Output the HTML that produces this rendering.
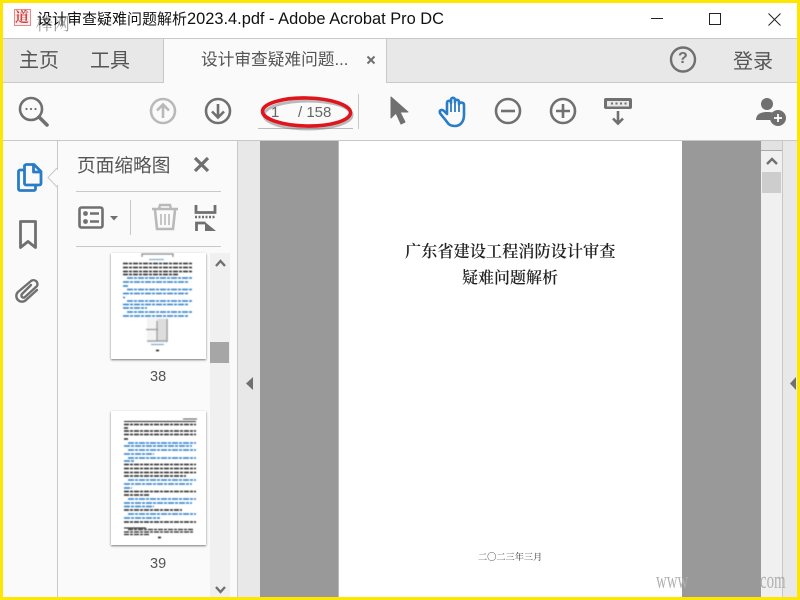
<!DOCTYPE html>
<html lang="zh"><head><meta charset="utf-8"><title>Adobe Acrobat</title>
<style>
html,body{margin:0;padding:0}
body{width:800px;height:600px;overflow:hidden;position:relative;background:#fafafa;font-family:"Liberation Sans","Noto Sans CJK SC",sans-serif}
.a{position:absolute}
.t{position:absolute;white-space:nowrap;line-height:1}
svg{position:absolute;overflow:visible}
.thumb{filter:blur(.45px)}
</style></head><body>
<div class="a" style="left:3px;top:3px;width:794px;height:35px;background:#fff"></div>
<div class="a" style="left:3px;top:38px;width:794px;height:1px;background:#c8c8c8"></div>
<div class="a" style="left:3px;top:39px;width:794px;height:43px;background:#e8e8e8"></div>
<div class="a" style="left:163px;top:39px;width:224px;height:44px;background:#fafafa;border-left:1px solid #c8c8c8;border-right:1px solid #c8c8c8;box-sizing:border-box"></div>
<div class="a" style="left:3px;top:82px;width:160px;height:1px;background:#c8c8c8"></div>
<div class="a" style="left:387px;top:82px;width:410px;height:1px;background:#c8c8c8"></div>
<div class="a" style="left:3px;top:140px;width:794px;height:1px;background:#c8c8c8"></div>
<div class="a" style="left:57px;top:141px;width:1px;height:456px;background:#c8c8c8"></div>
<div class="a" style="left:210px;top:253px;width:20px;height:344px;background:#f0f0f0"></div>
<div class="a" style="left:210px;top:342px;width:19px;height:21px;background:#a6a6a6"></div>
<div class="a" style="left:237px;top:141px;width:1px;height:456px;background:#c8c8c8"></div>
<div class="a" style="left:238px;top:141px;width:22px;height:456px;background:#e8e8e8"></div>
<div class="a" style="left:260px;top:141px;width:78px;height:456px;background:#999"></div>
<div class="a" style="left:338px;top:141px;width:344px;height:456px;background:#fff;border-left:1px solid #bbb;box-sizing:border-box"></div>
<div class="a" style="left:682px;top:141px;width:79px;height:456px;background:#999"></div>
<div class="a" style="left:761px;top:141px;width:21px;height:456px;background:#f0f0f0"></div>
<div class="a" style="left:761px;top:141px;width:21px;height:10px;background:#e2e2e2;border-bottom:1px solid #aaa;box-sizing:border-box"></div>
<div class="a" style="left:762px;top:172px;width:19px;height:21px;background:#cdcdcd"></div>
<div class="a" style="left:782px;top:141px;width:1px;height:456px;background:#c8c8c8"></div>
<div class="a" style="left:783px;top:141px;width:14px;height:456px;background:#e8e8e8"></div>

<!-- title bar -->
<div class="a" style="left:14px;top:9px;width:15px;height:15px;border:1px solid #e88;background:#fdeeee"></div>
<div class="t" style="left:15px;top:10px;font-size:14px;font-weight:bold;color:#c44;font-family:'Noto Serif CJK SC',serif">道</div>
<div class="t" style="left:36px;top:14px;font-size:17px;color:#999;font-family:'Noto Serif CJK SC',serif">棒网</div>
<div class="t" style="left:37px;top:11px;font-size:15px;color:#111">设计审查疑难问题解析<span style="font-size:16.4px">2023.4.pdf - Adobe Acrobat Pro DC</span></div>
<svg style="left:0;top:0" width="800" height="40" fill="none" stroke="#222" stroke-width="1">
<path d="M651 18.500h12"/><rect x="709.500" y="13.500" width="11" height="11"/><path d="M768.500 13.500l12 12M780.500 13.500l-12 12"/></svg>

<!-- tabs -->
<div class="t" style="left:19px;top:51px;font-size:20px;color:#555">主页</div>
<div class="t" style="left:90px;top:51px;font-size:20px;color:#555">工具</div>
<div class="t" style="left:201px;top:52px;font-size:16.700px;color:#555">设计审查疑难问题...</div>
<svg style="left:0;top:0" width="800" height="140" fill="none" stroke="#707070">
<path d="M367.500 56.500l7 7M374.500 56.500l-7 7" stroke-width="2"/>
<circle cx="683" cy="59.500" r="12" stroke-width="2.400"/>
</svg>
<div class="t" style="left:678px;top:51px;font-size:16px;font-weight:bold;color:#707070">?</div>
<div class="t" style="left:733px;top:52px;font-size:20px;color:#555">登录</div>

<!-- toolbar icons -->
<svg style="left:0;top:0" width="800" height="140" fill="none" stroke="#707070" stroke-width="2.600">
<circle cx="31" cy="109" r="11"/><path d="M39 117l8 8" stroke-width="3.600" stroke-linecap="round"/>
<circle cx="26.500" cy="109" r="1.100" fill="#707070" stroke="none"/><circle cx="31" cy="109" r="1.100" fill="#707070" stroke="none"/><circle cx="35.500" cy="109" r="1.100" fill="#707070" stroke="none"/>
<g stroke="#b9b9b9"><circle cx="163" cy="111" r="12"/><path d="M163 118v-13M157 110.500l6-6 6 6"/></g>
<circle cx="218" cy="111" r="12"/><path d="M218 104v13M212 111.500l6 6 6-6"/>
<circle cx="508" cy="111" r="12"/><path d="M501 111h14"/>
<circle cx="563" cy="111" r="12"/><path d="M556 111h14M563 104v14"/>
<path d="M618 111v12M613 118.500l5 5 5-5"/>
<path d="M391 97v21l5-5 5 11 4-2-5-10h8z" fill="#707070" stroke="#707070" stroke-width="1" stroke-linejoin="round"/>
<path d="M447 122c-2-3-6-7-7-9-1-3 2-4 4-2l3 3v-11c0-3 4-3 4 0v-3c0-3 4-3 4 0v2c0-3 4-3 4 0v2c1-2 5-2 5 1v10c0 7-4 11-9 11-4 0-6-1-8-4z" stroke="#2a7cc7" stroke-linejoin="round"/>
<path d="M451 103v9M455 100v12M459 102v10" stroke="#2a7cc7" stroke-width="1.800"/>
</svg>
<svg style="left:0;top:0" width="800" height="140">
<rect x="604" y="98" width="28" height="11" rx="2" fill="#707070"/>
<rect x="607" y="101" width="22" height="5.500" fill="#e8e8e8"/>
<path d="M611 102.500h2v2h-2zM615.500 102.500h2v2h-2zM620 102.500h2v2h-2zM624.500 102.500h2v2h-2z" fill="#707070"/>
</svg>
<div class="a" style="left:358px;top:94px;width:1px;height:35px;background:#c8c8c8"></div>
<div class="a" style="left:258px;top:128px;width:95px;height:1px;background:#bbb"></div>
<div class="t" style="left:271px;top:105px;font-size:15px;color:#666">1</div>
<div class="t" style="left:298px;top:105px;font-size:15px;color:#666">/ 158</div>
<svg style="left:0;top:0" width="800" height="140" fill="none">
<ellipse cx="308" cy="115" rx="44" ry="14" stroke="#777" stroke-width="3" opacity=".5"/>
<ellipse cx="306.500" cy="112" rx="44" ry="14" stroke="#e0141c" stroke-width="3.600" transform="rotate(1 306.500 112)"/>
<circle cx="767" cy="104" r="6" fill="#707070"/>
<path d="M756 120c0-6 5-8 11-8s9 1 10 3l-6 5z" fill="#707070"/>
<circle cx="778" cy="118" r="8" fill="#707070"/>
<path d="M774 118h8M778 114v8" stroke="#fff" stroke-width="1.800"/>
</svg>

<!-- left rail -->
<svg style="left:0;top:0" width="60" height="320" fill="none" stroke="#707070" stroke-width="2.400">
<g stroke="#2a7cc7" stroke-linejoin="round" stroke-width="2.800"><path d="M25 170h-5a1.500 1.500 0 0 0-1.500 1.500V189a1.500 1.500 0 0 0 1.500 1.500h14a1.500 1.500 0 0 0 1.500-1.500v-3"/>
<path d="M26 164.500h8l7 7v12a1.500 1.500 0 0 1-1.500 1.500H26a1.500 1.500 0 0 1-1.500-1.500v-18z" fill="#fafafa"/><path d="M33.500 164.500v7.500h7.500"/></g>
<path d="M20.500 247.500v-26h15v26l-7.500-6z" stroke-width="2.800" stroke-linejoin="round"/>
<path d="M37 290L26 300a5.500 5.500 0 0 1-8-8L31 281a4 4 0 0 1 6 5L25 297a2 2 0 0 1-3-3L31 285" stroke-width="2.400" stroke-linecap="round"/>
</svg>
<svg style="left:47px;top:168px" width="12" height="20"><path d="M10 0L1 9.500 10 19" fill="#fafafa" stroke="#c8c8c8"/></svg>
<div class="a" style="left:57px;top:170px;width:2px;height:15px;background:#fafafa"></div>

<!-- panel -->
<div class="t" style="left:77px;top:157px;font-size:18.700px;color:#555">页面缩略图</div>
<svg style="left:0;top:140px" width="240" height="120" fill="none" stroke="#707070" stroke-width="2.600">
<path d="M195 18l13 13M208 18l-13 13" stroke-width="3.200"/>
<rect x="79.500" y="67.500" width="23" height="20" rx="2"/>
<circle cx="85.500" cy="73.500" r="2.400" fill="#707070" stroke="none"/><circle cx="85.500" cy="81.500" r="2.400" fill="#707070" stroke="none"/>
<path d="M90 73.500h9M90 81.500h9" stroke-width="2.400"/>
<path d="M110 76h8l-4 4.500z" fill="#707070" stroke="none"/>
<g stroke="#b9b9b9"><path d="M152 69h26M159 69l1-4h10l1 4" stroke-width="2.400"/><path d="M155 70l2 19h16l2-19" stroke-width="2.600"/><path d="M161 74v11M165 74v11M169 74v11" stroke-width="1.600"/></g>
<path d="M196 65v7.500h19v-7.500" stroke-width="2.800"/>
<path d="M195 77h21" stroke-width="2.400" stroke-dasharray="2 1.500"/>
<path d="M196.500 91v-8h9" stroke-width="2.800"/>
<path d="M205 82l11 9h-11z" fill="#707070" stroke="none"/>
</svg>
<div class="a" style="left:76px;top:191px;width:145px;height:1px;background:#c8c8c8"></div>
<div class="a" style="left:76px;top:246px;width:145px;height:1px;background:#c8c8c8"></div>
<div class="a" style="left:130px;top:200px;width:1px;height:35px;background:#c8c8c8"></div>

<!-- thumbs -->
<div class="a" style="left:111px;top:253px;width:95px;height:106px;background:#fff;box-shadow:0 1px 2px #777"></div>
<svg class="thumb" style="left:111px;top:253px" width="95" height="106" fill="none" stroke-width="1.500">
<path d="M31 4V1h31v3" stroke="#888" stroke-width="1.200"/>
<path d="M38 6.500h15" stroke="#6a9bd0" stroke-width="1"/>
<g stroke="#222" stroke-dasharray="5 1 3 1"><path d="M12 10.500h70M12 14.500h70M12 18.500h70M12 21.500h56"/></g>
<g stroke="#2a7cc7" stroke-dasharray="6 1 3 1"><path d="M16 25h66M12 29h66M12 33h5M16 36.500h66M12 40.500h66M12 44.500h2M16 48h66M12 51.500h66M12 55h24M16 59h66M12 63h66"/></g>
<rect x="36" y="65" width="21" height="25" fill="#f3f3f3" stroke="none"/>
<rect x="46" y="66" width="11" height="22" fill="#ddd" stroke="none"/>
<path d="M35 76.500h12M46 68v20M36 88h20M56 66v23" stroke="#999" stroke-width="1.200"/>
<path d="M40 91.500h13" stroke="#6a9bd0" stroke-width="1"/>
<path d="M45 97.500h3" stroke="#111" stroke-width="1.500"/>
</svg>
<div class="t" style="left:150px;top:370px;font-size:14.500px;color:#555">38</div>

<div class="a" style="left:111px;top:411px;width:95px;height:134px;background:#fff;box-shadow:0 1px 2px #777"></div>
<svg class="thumb" style="left:111px;top:411px" width="95" height="134" fill="none" stroke-width="1.500">
<path d="M72 8h14" stroke="#555" stroke-width="1"/>
<path d="M13 10.500h72" stroke="#222" stroke-width="1"/>
<g stroke="#222" stroke-dasharray="5 1 3 1"><path d="M13 13.500h72M13 17h4M13 20h72M13 23.500h72M13 28h4"/></g>
<g stroke="#2a7cc7" stroke-dasharray="6 1 3 1"><path d="M17 32h68M13 35h68M17 39h68M13 43h30M17 47h68M13 50h10"/></g>
<g stroke="#222" stroke-dasharray="5 1 3 1"><path d="M13 53.500h72M13 57.500h72M13 61.500h72M13 65h62"/></g>
<g stroke="#2a7cc7" stroke-dasharray="6 1 3 1"><path d="M17 69h68M13 73h68M13 77h8"/></g>
<g stroke="#222" stroke-dasharray="5 1 3 1"><path d="M13 80.500h72M13 84h26"/></g>
<g stroke="#2a7cc7" stroke-dasharray="6 1 3 1"><path d="M17 88h68M13 92h68M13 95.500h30"/></g>
<path d="M13 99h58" stroke="#222" stroke-dasharray="5 1 3 1"/>
<g stroke="#2a7cc7" stroke-dasharray="6 1 3 1"><path d="M17 103h68M13 107h36"/></g>
<path d="M13 111h72" stroke="#222" stroke-dasharray="5 1 3 1"/>
<path d="M13 117h22" stroke="#111" stroke-width="1"/>
<g stroke="#222" stroke-dasharray="5 1 3 1" stroke-width="1.200"><path d="M17 118.500h66M13 121h70M13 123.500h26"/></g>
<path d="M47 126.500h3" stroke="#111" stroke-width="1.500"/>
</svg>
<div class="t" style="left:150px;top:557px;font-size:14.500px;color:#555">39</div>

<!-- scroll arrows -->
<svg style="left:0;top:0" width="800" height="600" fill="none" stroke="#707070" stroke-width="2.400">
<path d="M216 266l4.500-5 4.500 5M216 587l4.500 5 4.500-5"/>
<path d="M767 164l5-5 5 5"/>
<path d="M253 377v13l-7-6.500z" fill="#707070" stroke="none"/>
<path d="M796 377v13l-6-6.500z" fill="#707070" stroke="none"/>
</svg>

<!-- page text -->
<div class="t" style="left:405px;top:242px;font-size:16.200px;color:#222;font-family:'Noto Serif CJK SC',serif;font-weight:600">广东省建设工程消防设计审查</div>
<div class="t" style="left:462px;top:269px;font-size:16px;color:#222;font-family:'Noto Serif CJK SC',serif;font-weight:600">疑难问题解析</div>
<div class="t" style="left:478px;top:552px;font-size:9.200px;color:#333;font-family:'Noto Serif CJK SC',serif">二〇二三年三月</div>

<!-- watermark -->
<div class="t" style="left:656px;top:569px;font-size:24px;color:#b0b0b0;font-family:'Liberation Serif',serif;transform:scaleX(.62);transform-origin:left top">www</div>
<div class="t" style="left:760px;top:569px;font-size:24px;color:#b0b0b0;font-family:'Liberation Serif',serif;transform:scaleX(.62);transform-origin:left top">com</div>

<!-- yellow border -->
<div class="a" style="left:0;top:0;width:800px;height:3px;background:#ffe600"></div>
<div class="a" style="left:0;top:597px;width:800px;height:3px;background:#ffe600"></div>
<div class="a" style="left:0;top:0;width:3px;height:600px;background:#ffe600"></div>
<div class="a" style="left:797px;top:0;width:3px;height:600px;background:#ffe600"></div>
</body></html>
